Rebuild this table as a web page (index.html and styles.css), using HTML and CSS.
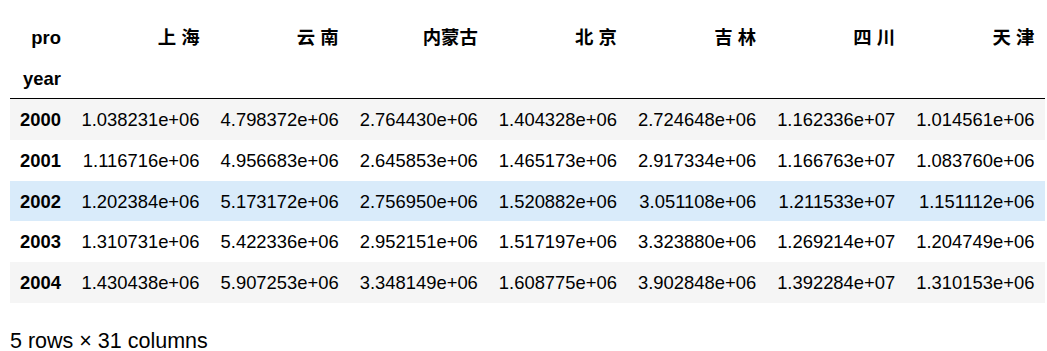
FILE: index.html
```html
<!DOCTYPE html>
<html lang="en">
<head>
    <meta charset="UTF-8">
    <title>DataFrame</title>
    <link rel="stylesheet" href="styles.css">
</head>
<body>
    <!-- Rendered DataFrame output -->
    <div class="output">
        <table class="dataframe">
            <thead>
                <tr>
                    <th>pro</th>
                    <th>上 海</th>
                    <th>云 南</th>
                    <th>内蒙古</th>
                    <th>北 京</th>
                    <th>吉 林</th>
                    <th>四 川</th>
                    <th>天 津</th>
                </tr>
                <tr>
                    <th>year</th>
                    <th></th><th></th><th></th><th></th><th></th><th></th><th></th>
                </tr>
            </thead>
            <tbody>
                <tr>
                    <th>2000</th>
                    <td>1.038231e+06</td><td>4.798372e+06</td><td>2.764430e+06</td><td>1.404328e+06</td><td>2.724648e+06</td><td>1.162336e+07</td><td>1.014561e+06</td>
                </tr>
                <tr>
                    <th>2001</th>
                    <td>1.116716e+06</td><td>4.956683e+06</td><td>2.645853e+06</td><td>1.465173e+06</td><td>2.917334e+06</td><td>1.166763e+07</td><td>1.083760e+06</td>
                </tr>
                <tr class="hover">
                    <th>2002</th>
                    <td>1.202384e+06</td><td>5.173172e+06</td><td>2.756950e+06</td><td>1.520882e+06</td><td>3.051108e+06</td><td>1.211533e+07</td><td>1.151112e+06</td>
                </tr>
                <tr>
                    <th>2003</th>
                    <td>1.310731e+06</td><td>5.422336e+06</td><td>2.952151e+06</td><td>1.517197e+06</td><td>3.323880e+06</td><td>1.269214e+07</td><td>1.204749e+06</td>
                </tr>
                <tr>
                    <th>2004</th>
                    <td>1.430438e+06</td><td>5.907253e+06</td><td>3.348149e+06</td><td>1.608775e+06</td><td>3.902848e+06</td><td>1.392284e+07</td><td>1.310153e+06</td>
                </tr>
            </tbody>
        </table>
        <p class="shape">5 rows × 31 columns</p>
    </div>
</body>
</html>
```

FILE: styles.css
```css
/* General styles */
* {
    margin: 0;
    padding: 0;
    box-sizing: border-box;
}

body {
    font-family: "Liberation Sans", Arial, "Noto Sans CJK SC", sans-serif;
    background-color: #ffffff;
    color: #000000;
}

.output {
    padding: 17px 0 0 10px;
}

/* DataFrame table */
.dataframe {
    border-collapse: collapse;
    border-spacing: 0;
    border: none;
    font-size: 18.4px;
}

.dataframe th,
.dataframe td {
    text-align: right;
    vertical-align: middle;
    padding: 9.85px 10.5px;
    line-height: 21px;
    height: 40.7px;
    white-space: nowrap;
    font-weight: normal;
}

.dataframe th {
    font-weight: bold;
}

.dataframe thead th:first-child,
.dataframe tbody th {
    padding-left: 10px;
    padding-right: 10px;
}

.dataframe thead {
    border-bottom: 1px solid #000000;
}

.dataframe tbody tr:nth-child(odd) {
    background-color: #f5f5f5;
}

.dataframe tbody tr.hover {
    background-color: #d9ebfa;
}

/* Shape footer */
.shape {
    margin-top: 26px;
    font-size: 21.5px;
}
```
